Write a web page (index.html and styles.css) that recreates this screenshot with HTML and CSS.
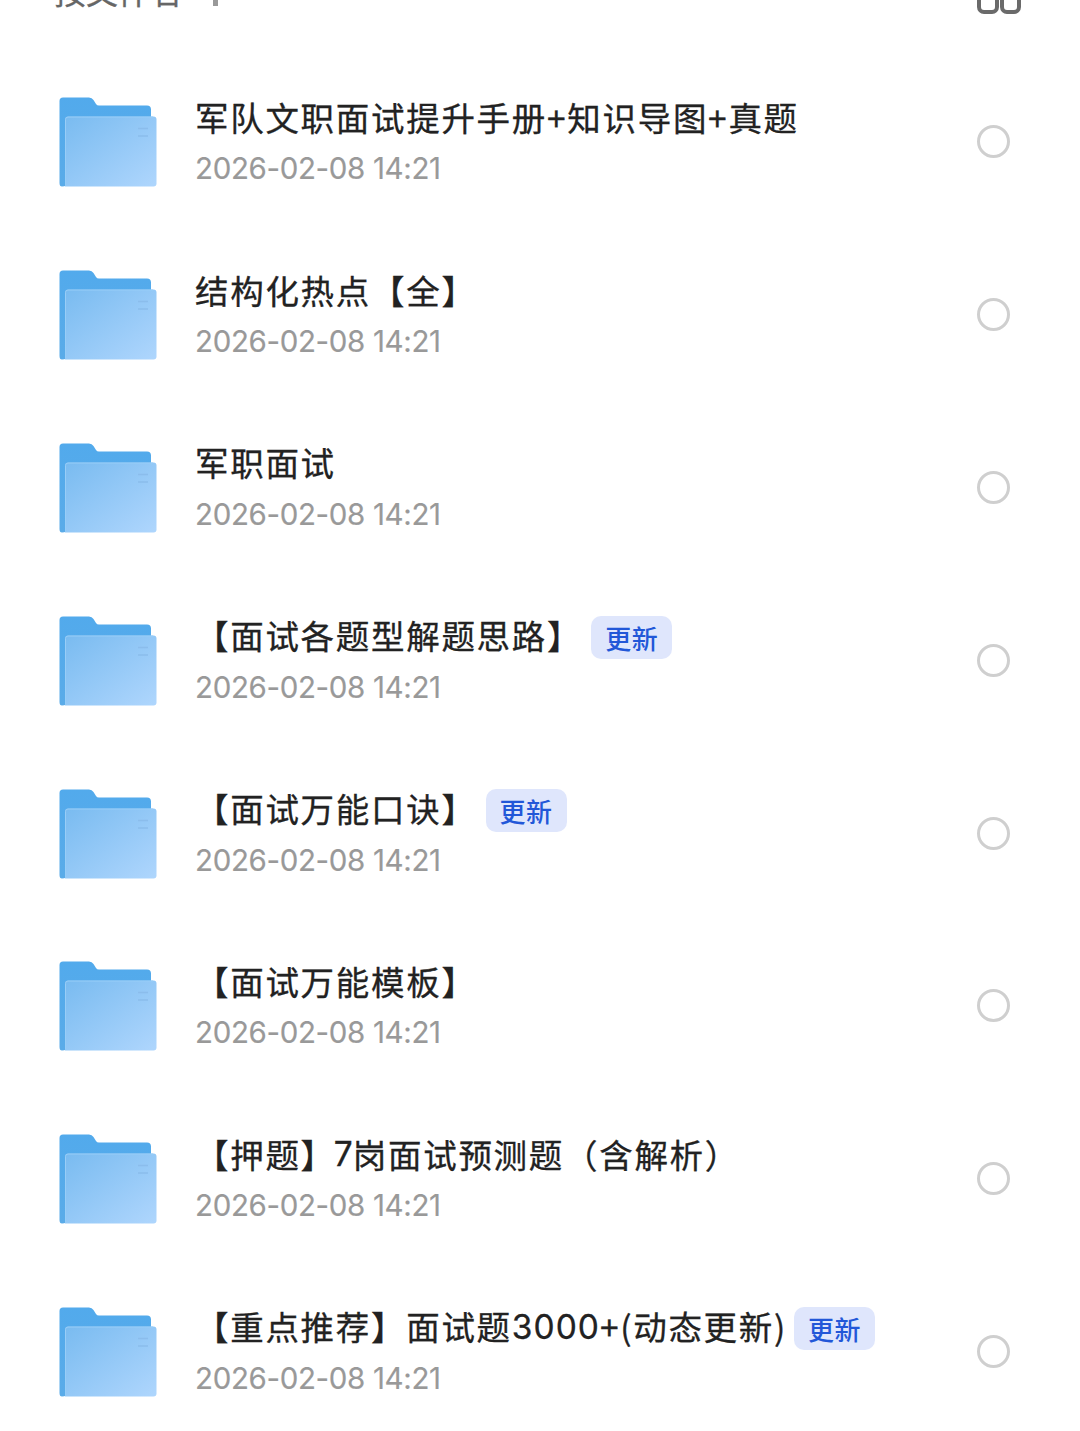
FILE: index.html
```html
<!DOCTYPE html>
<html lang="zh-CN">
<head>
    <meta charset="UTF-8">
    <meta name="viewport" content="width=device-width, initial-scale=1.0">
    <title>文件列表</title>
    <link rel="stylesheet" href="styles.css">
</head>
<body>

    <!-- 文件夹图标 -->
    <svg class="defs" width="0" height="0">
        <defs>
            <linearGradient id="front" x1="0" y1="0" x2="1" y2="1">
                <stop offset="0" stop-color="#79bbf0"/>
                <stop offset="1" stop-color="#afd6fd"/>
            </linearGradient>
            <linearGradient id="back" x1="0" y1="0" x2="0" y2="1">
                <stop offset="0" stop-color="#52aaec"/>
                <stop offset="1" stop-color="#5aabe8"/>
            </linearGradient>
        </defs>
        <symbol id="folder" viewBox="0 0 98 90">
            <path d="M4 .5H30Q33 .5 34.500 3L37 7Q38 8.500 40 8.500H88Q92 8.500 92 12.500V88H8Q5 89.500 3 89.500Q.5 89.500 .5 86V4Q.5 .5 4 .5Z" fill="url(#back)"/>
            <path d="M9 19.500H94.500Q97.500 19.500 97.500 22.500V86.500Q97.500 89.500 94.500 89.500H6V22.500Q6 19.500 9 19.500Z" fill="url(#front)"/>
            <path d="M6.500 88V22.500Q6.500 20 9 20H94" fill="none" stroke="#98cdf7" stroke-width="1"/>
            <path d="M79 31.500H89M79 39H89" stroke="#8bbdec" stroke-width="1.600"/>
        </symbol>
    </svg>

    <div class="toolbar">
        <span class="sort">按文件名</span>
        <span class="arrow"></span>
        <span class="grid-icon"><i></i><i></i></span>
    </div>

    <ul class="file-list">
        <li class="row">
            <svg class="folder"><use href="#folder"/></svg>
            <div class="info">
                <div class="name">军队文职面试提升手册+知识导图+真题</div>
                <div class="date">2026-02-08 14:21</div>
            </div>
            <span class="check"></span>
        </li>
        <li class="row">
            <svg class="folder"><use href="#folder"/></svg>
            <div class="info">
                <div class="name">结构化热点【全】</div>
                <div class="date">2026-02-08 14:21</div>
            </div>
            <span class="check"></span>
        </li>
        <li class="row">
            <svg class="folder"><use href="#folder"/></svg>
            <div class="info">
                <div class="name">军职面试</div>
                <div class="date">2026-02-08 14:21</div>
            </div>
            <span class="check"></span>
        </li>
        <li class="row">
            <svg class="folder"><use href="#folder"/></svg>
            <div class="info">
                <div class="name">【面试各题型解题思路】<span class="tag">更新</span></div>
                <div class="date">2026-02-08 14:21</div>
            </div>
            <span class="check"></span>
        </li>
        <li class="row">
            <svg class="folder"><use href="#folder"/></svg>
            <div class="info">
                <div class="name">【面试万能口诀】<span class="tag">更新</span></div>
                <div class="date">2026-02-08 14:21</div>
            </div>
            <span class="check"></span>
        </li>
        <li class="row">
            <svg class="folder"><use href="#folder"/></svg>
            <div class="info">
                <div class="name">【面试万能模板】</div>
                <div class="date">2026-02-08 14:21</div>
            </div>
            <span class="check"></span>
        </li>
        <li class="row">
            <svg class="folder"><use href="#folder"/></svg>
            <div class="info">
                <div class="name">【押题】<span class="num seven">7</span>岗面试预测题（含解析）</div>
                <div class="date">2026-02-08 14:21</div>
            </div>
            <span class="check"></span>
        </li>
        <li class="row">
            <svg class="folder"><use href="#folder"/></svg>
            <div class="info">
                <div class="name">【重点推荐】面试题<span class="num">3000</span>+(动态更新)<span class="tag close">更新</span></div>
                <div class="date">2026-02-08 14:21</div>
            </div>
            <span class="check"></span>
        </li>
    </ul>

</body>
</html>
```
FILE: styles.css
```css
* {
    box-sizing: border-box;
}

body {
    margin: 0;
    height: 1431px;
    overflow: hidden;
    background-color: #fff;
    font-family: "Noto Sans CJK SC", sans-serif;
    color: #222;
}

.defs {
    display: block;
}

.toolbar {
    display: flex;
    align-items: flex-start;
    height: 56px;
    padding: 0 59px 0 54px;
}

.sort {
    margin-top: -30px;
    font-size: 32px;
    line-height: 40px;
    color: #666;
    -webkit-text-stroke: .3px #666;
}

.arrow {
    width: 5px;
    height: 6px;
    margin-left: 31px;
    background-color: #999;
}

.grid-icon {
    display: flex;
    gap: 1px;
    margin: -7px 0 0 auto;
}

.grid-icon i {
    width: 21.500px;
    height: 21px;
    border: 4.500px solid #6a6a6a;
    border-radius: 7px;
}

.file-list {
    margin: 0;
    padding: 0;
    list-style: none;
}

.row {
    display: flex;
    align-items: center;
    height: 172.800px;
    padding: 0 70px 0 59px;
}

.folder {
    width: 98px;
    height: 90px;
    flex: none;
}

.info {
    flex: 1;
    margin-left: 38px;
}

.name {
    display: flex;
    align-items: center;
    height: 50px;
    margin-top: -1px;
    font-size: 33.500px;
    letter-spacing: 1.700px;
    white-space: nowrap;
    text-spacing-trim: space-all;
    -webkit-text-stroke: .3px #222;
}

.num {
    margin-top: 2px;
    font-family: Inter, sans-serif;
    letter-spacing: 1px;
}

.seven {
    margin-right: -1px;
    margin-left: -2px;
}

.tag {
    width: 81px;
    height: 43px;
    margin: 6px 0 0 9px;
    border-radius: 10px;
    background-color: #dfe6fc;
    color: #2257d8;
    font-size: 26px;
    font-weight: 500;
    line-height: 43px;
    letter-spacing: .5px;
    text-align: center;
    -webkit-text-stroke: 0;
}

.close {
    margin-left: 7px;
}

.date {
    height: 50px;
    margin-top: 1px;
    font-family: Inter, sans-serif;
    font-size: 29.500px;
    line-height: 52px;
    letter-spacing: -.350px;
    color: #999;
    -webkit-text-stroke: .15px #999;
}

.check {
    width: 33px;
    height: 33px;
    margin-top: -1px;
    border: 3px solid #cfcfcf;
    border-radius: 50%;
}
```
